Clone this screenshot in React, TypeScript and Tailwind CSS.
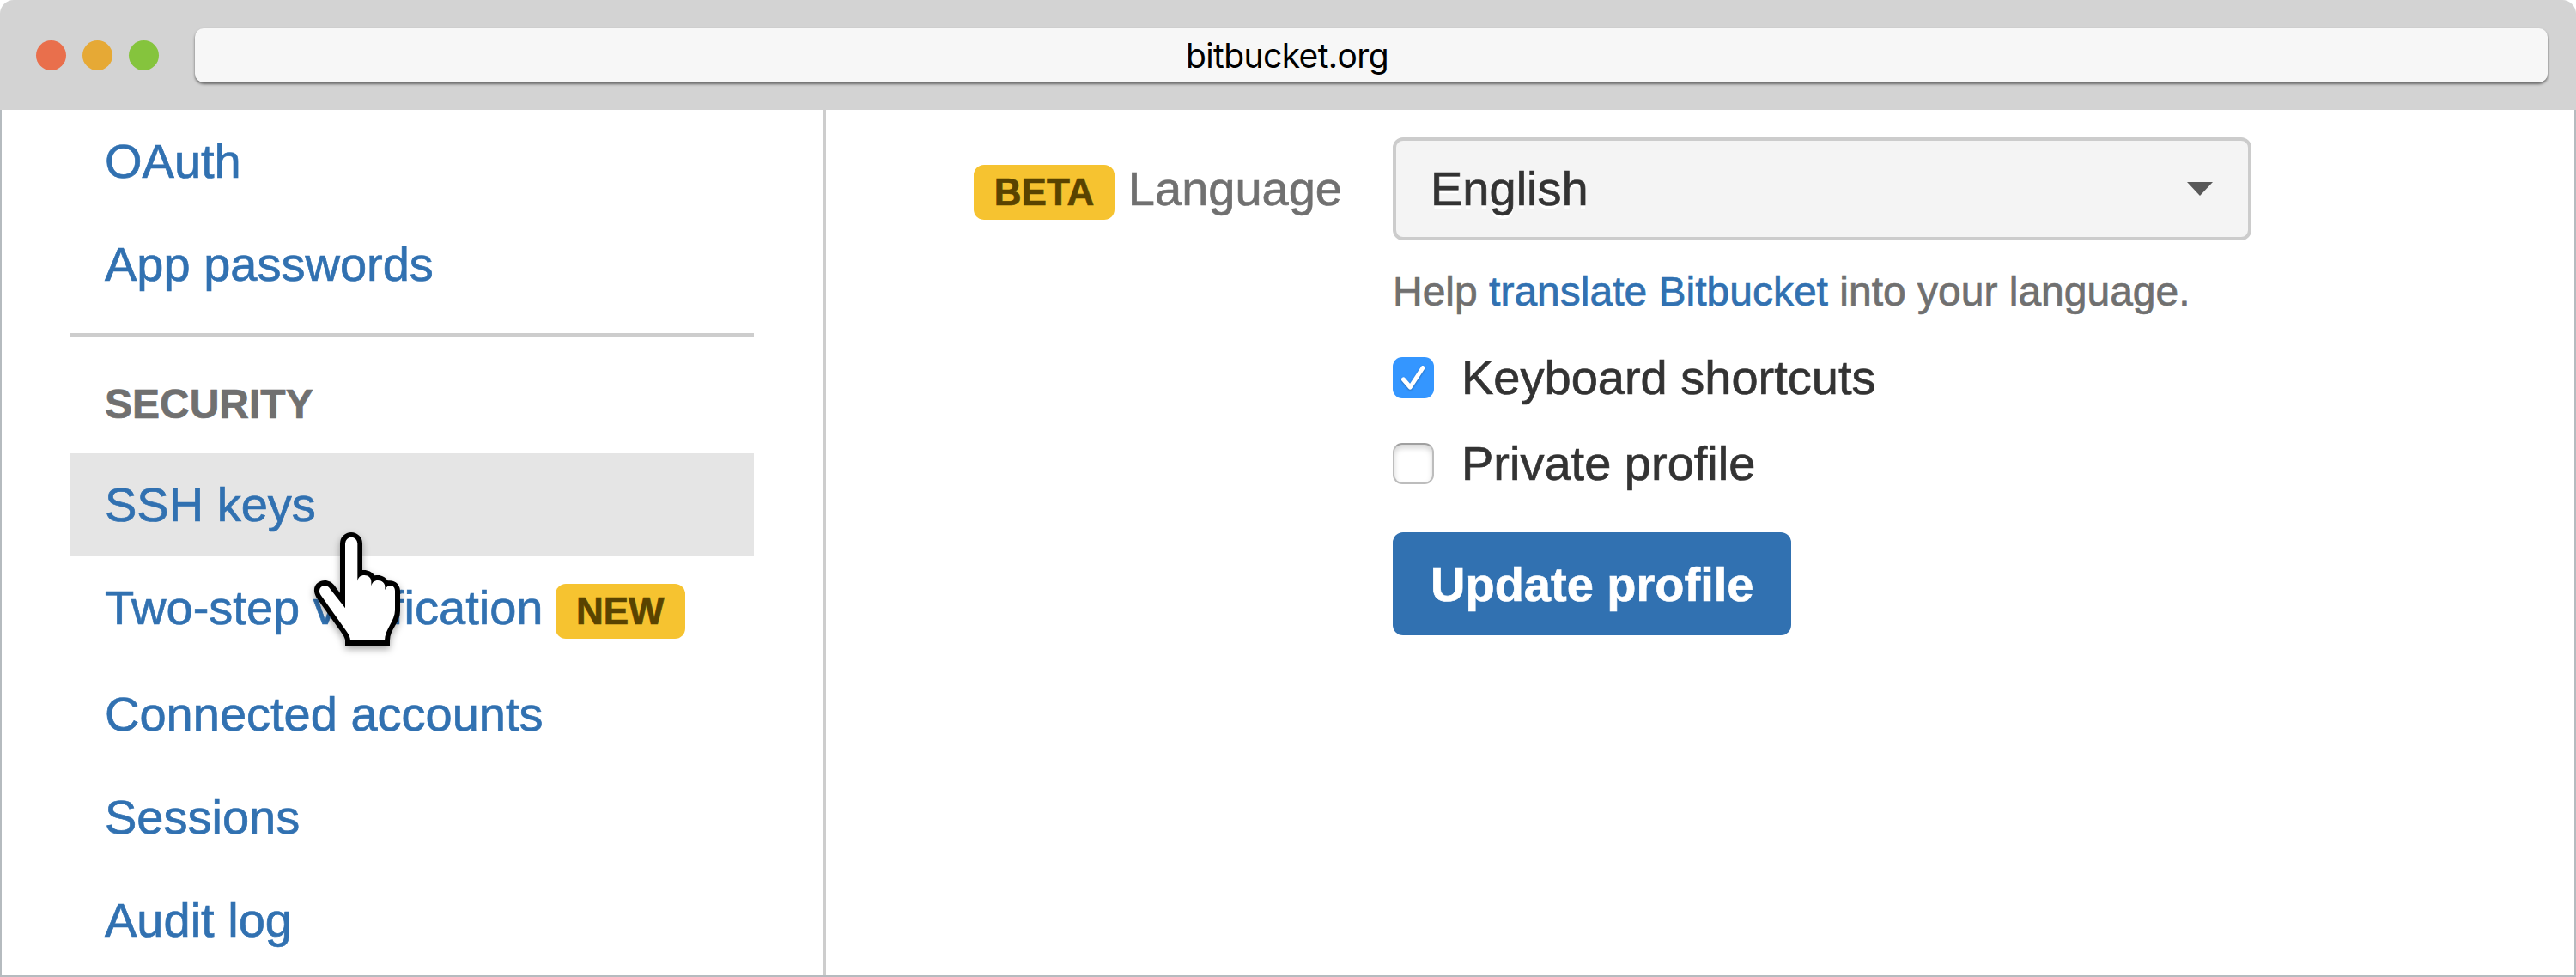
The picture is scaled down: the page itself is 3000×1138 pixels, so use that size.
import type { ReactNode } from "react";

function AddressBar() {
  return (
    <header className="flex h-32 shrink-0 items-center rounded-t-[16px] bg-[#d3d3d3] pr-[33px] pl-[42px]">
      <div className="flex gap-[19px]">
        <span className="size-[35px] rounded-full bg-[#e96f4c]" />
        <span className="size-[35px] rounded-full bg-[#e6a935]" />
        <span className="size-[35px] rounded-full bg-[#85c43d]" />
      </div>
      <div className="ml-[42px] flex h-[63px] flex-1 items-center justify-center rounded-[10px] bg-[#f7f7f7] pr-[196px] font-['Inter',sans-serif] text-[39px] leading-none tracking-[-0.6px] text-black shadow-[0_2px_3px_rgba(0,0,0,0.5)]">
        bitbucket.org
      </div>
    </header>
  );
}

function Badge({ children }: { children: ReactNode }) {
  return (
    <span className="flex h-16 items-center rounded-[12px] bg-[#f6c330] px-6 text-[44px] leading-[64px] font-bold text-[#594300]">
      {children}
    </span>
  );
}

function NavItem({ label, active }: { label: string; active?: boolean }) {
  return (
    <a className={`block h-[120px] px-10 py-5 leading-[80px] text-[#3171b1] ${active ? "bg-[#e5e5e5]" : ""}`}>
      {label}
    </a>
  );
}

function PointerCursor() {
  return (
    <svg
      className="absolute top-[620px] left-[366px] h-[132px] w-[100px] overflow-visible drop-shadow-[0_4px_4px_rgba(0,0,0,0.35)]"
      viewBox="78 60 300 396"
    >
      <path
        fill="#000"
        d="M168 99A39 39 0 0 1 246 99V192C262 190 278 196 289 211C308 207 325 214 335 229C360 225 378 243 378 265V335C378 375 342 398 342 438V456H186V438C186 427 172 409 160 392L85 287C65 250 90 228 115 228C128 228 140 235 147 244L168 272Z"
      />
      <path
        fill="#fff"
        d="M186 99A21.5 21.5 0 0 1 229 99V230C232 216 240 210 253 210C268 210 277 220 277 232V248C280 234 288 228 300 228C315 228 325 238 325 250V262C328 252 335 246 343 246C355 246 360 255 360 265V332C360 370 324 398 324 438H204C204 420 187 402 175 384L100 278C90 262 100 246 115 246C122 246 128 250 133 257L186 325Z"
      />
    </svg>
  );
}

function Checkbox({ label, checked }: { label: string; checked?: boolean }) {
  return (
    <label className="flex h-[100px] items-center gap-8 text-[#333]">
      {checked ? (
        <span className="size-12 rounded-[11px] bg-[#3496ff]">
          <svg viewBox="0 0 48 48" className="size-12 drop-shadow-[0_1px_1px_rgba(0,0,0,0.3)]">
            <path
              d="M12.5 26L20.3 35L35 12.5"
              fill="none"
              stroke="#fff"
              strokeWidth="5"
              strokeLinecap="round"
              strokeLinejoin="round"
            />
          </svg>
        </span>
      ) : (
        <span className="size-12 rounded-[11px] border-2 border-[#bdbdbd] border-t-[#a0a0a0] bg-white shadow-[inset_0_4px_6px_rgba(0,0,0,0.16)]" />
      )}
      <span className="leading-[80px]">{label}</span>
    </label>
  );
}

export default function App() {
  return (
    <div className="relative flex h-[1138px] w-[3000px] flex-col overflow-hidden bg-white font-['Liberation_Sans',Arial,sans-serif] text-[56px]">
      <AddressBar />
      <div className="flex flex-1 border-x-2 border-b-2 border-[#b5bbbf] [-webkit-text-stroke:0.7px_currentColor]">
        <nav className="w-[960px] border-r-4 border-[#cdcdcd] px-20">
          <NavItem label="OAuth" />
          <NavItem label="App passwords" />
          <hr className="mt-5 border-t-4 border-[#cdcdcd]" />
          <h2 className="h-[136px] px-10 pt-[39px] text-[48px] leading-[80px] font-bold text-[#707070]">SECURITY</h2>
          <NavItem label="SSH keys" active />
          <a className="flex h-[124px] pt-5 pl-10 leading-[80px] whitespace-pre text-[#3171b1]">
            Two-step verification{" "}
            <span className="mt-3 -ml-px">
              <Badge>NEW</Badge>
            </span>
          </a>
          <NavItem label="Connected accounts" />
          <NavItem label="Sessions" />
          <NavItem label="Audit log" />
        </nav>
        <main className="flex flex-1 pt-8">
          <div className="flex h-[120px] w-[601px] justify-end whitespace-pre text-[#707070]">
            <span className="mt-8">
              <Badge>BETA</Badge>
            </span>
            <span className="pt-5 leading-[80px]"> Language</span>
          </div>
          <div className="ml-[59px] w-[1000px]">
            <div className="flex h-[120px] items-center justify-between rounded-[12px] border-4 border-[#cccccc] bg-[#f4f4f4] pr-[41px] pl-10 text-[#333] [text-shadow:0_4px_0_#fff]">
              <span className="leading-[80px]">English</span>
              <svg viewBox="0 0 30 16" className="h-4 w-[30px]">
                <path d="M0 0H30L15 16Z" fill="#595959" />
              </svg>
            </div>
            <p className="h-[110px] pt-5 text-[48px] leading-[80px] text-[#707070]">
              Help <a className="text-[#3171b1]">translate Bitbucket</a> into your language.
            </p>
            <Checkbox label="Keyboard shortcuts" checked />
            <Checkbox label="Private profile" />
            <button className="mt-[30px] h-[120px] rounded-[12px] bg-[#3171b1] px-11 pt-px leading-[80px] font-bold whitespace-nowrap text-white">
              Update profile
            </button>
          </div>
        </main>
      </div>
      <PointerCursor />
    </div>
  );
}
